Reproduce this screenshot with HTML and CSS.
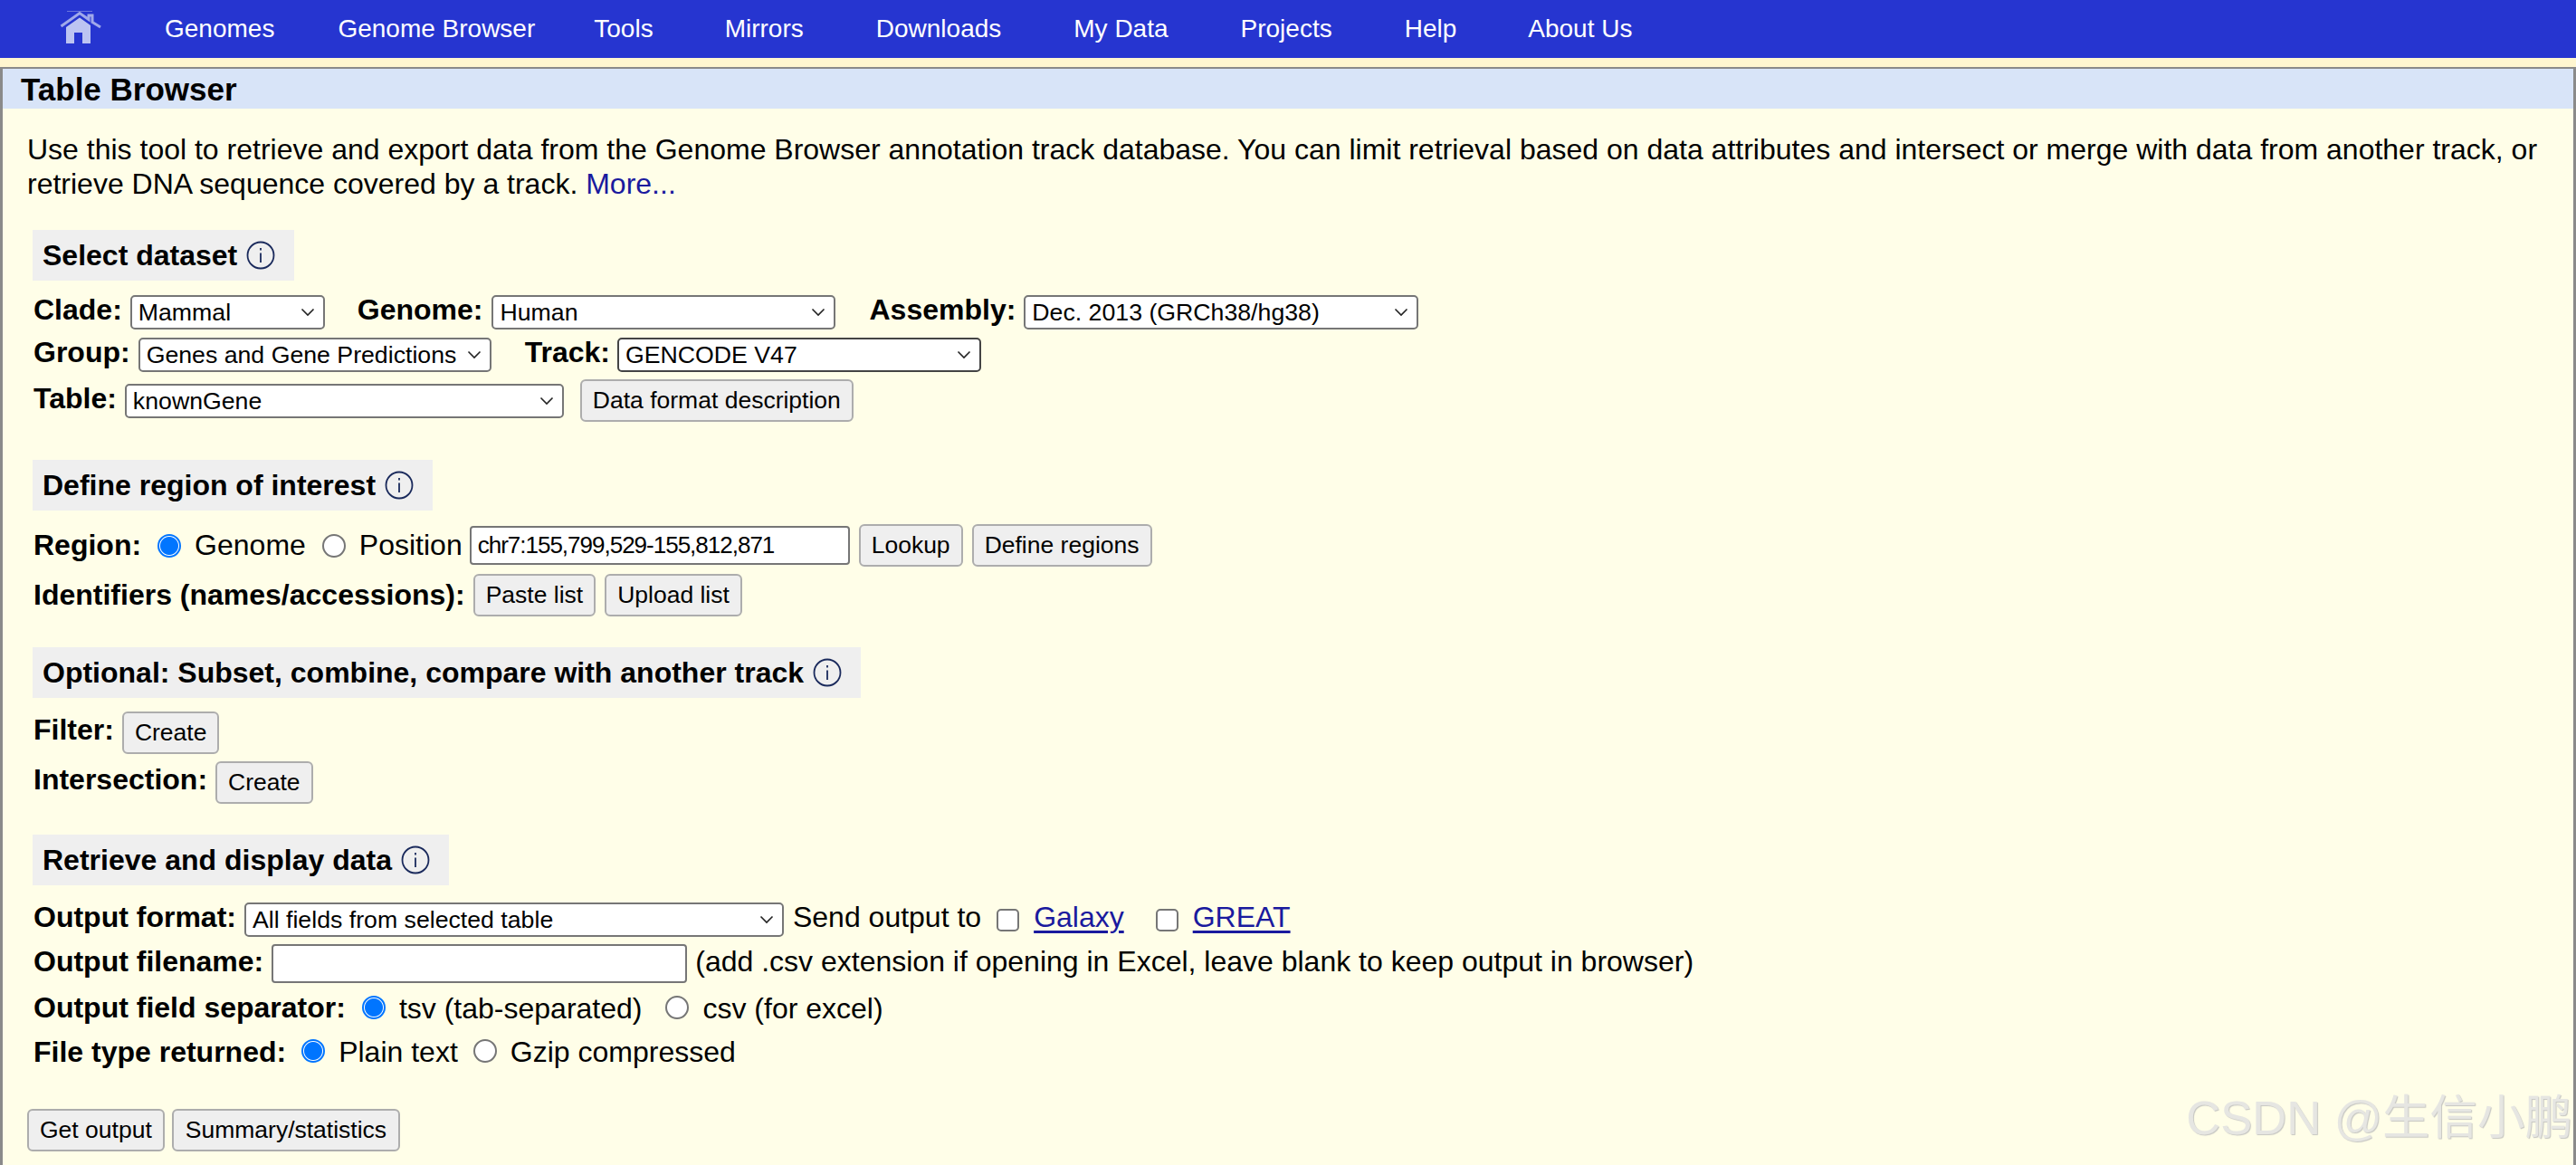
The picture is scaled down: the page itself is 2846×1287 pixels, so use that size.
FILE: index.html
```html
<!DOCTYPE html>
<html lang="en">
<head>
<meta charset="utf-8">
<title>Table Browser</title>
<link rel="stylesheet" href="styles.css">
</head>
<body>
<nav class="nav">
  <a class="home" href="#" aria-label="Home">
    <svg viewBox="0 0 46 36" width="46" height="36"><path class="home-top" d="M8 0.5 H36"/><path class="home-roof" d="M1.5 17 L22 2.5 L32 9.5 V5 H36 V12.5 L45 18"/><path class="home-body" d="M7 18 L22 7.5 L34 16 V36 H25 V24 H16 V36 H7 Z"/></svg>
  </a>
  <a href="#" class="nav-item n1">Genomes</a>
  <a href="#" class="nav-item n2">Genome Browser</a>
  <a href="#" class="nav-item n3">Tools</a>
  <a href="#" class="nav-item n4">Mirrors</a>
  <a href="#" class="nav-item n5">Downloads</a>
  <a href="#" class="nav-item n6">My Data</a>
  <a href="#" class="nav-item n7">Projects</a>
  <a href="#" class="nav-item n8">Help</a>
  <a href="#" class="nav-item n9">About Us</a>
</nav>
<main class="panel">
  <h1 class="title">Table Browser</h1>
  <div class="content">
    <p class="intro">Use this tool to retrieve and export data from the Genome Browser annotation track database. You can limit retrieval based on data attributes and intersect or merge with data from another track, or retrieve DNA sequence covered by a track. <a class="more" href="#">More...</a></p>

    <h2 class="sec s1">Select dataset <svg class="info" viewBox="0 0 32 32"><circle cx="16" cy="16" r="14.5"/><path d="M16 13.5V24M16 8V10.5"/></svg></h2>
    <div class="row r-clade up">
      <b>Clade:</b><select class="sel w-clade"><option>Mammal</option></select>
      <b class="gap-genome">Genome:</b><select class="sel w-genome"><option>Human</option></select>
      <b class="gap-assembly">Assembly:</b><select class="sel w-assembly"><option>Dec. 2013 (GRCh38/hg38)</option></select>
    </div>
    <div class="row r-group up">
      <b>Group:</b><select class="sel w-group"><option>Genes and Gene Predictions</option></select>
      <b class="gap-track">Track:</b><select class="sel sel-dark w-track"><option>GENCODE V47</option></select>
    </div>
    <div class="row r-table up">
      <b>Table:</b><select class="sel w-table"><option>knownGene</option></select>
      <button class="btn gap-dfd">Data format description</button>
    </div>

    <h2 class="sec s2">Define region of interest <svg class="info" viewBox="0 0 32 32"><circle cx="16" cy="16" r="14.5"/><path d="M16 13.5V24M16 8V10.5"/></svg></h2>
    <div class="row r-region">
      <b>Region:</b><input class="radio gap-r1" type="radio" name="region" checked><span class="opt">Genome</span><input class="radio gap-r2" type="radio" name="region"><span class="opt">Position</span>
      <input class="txt txt-pos w-pos" type="text" value="chr7:155,799,529-155,812,871">
      <button class="btn gap-look">Lookup</button>
      <button class="btn gap-def">Define regions</button>
    </div>
    <div class="row r-ident">
      <b>Identifiers (names/accessions):</b><button class="btn gap-paste">Paste list</button><button class="btn gap-up">Upload list</button>
    </div>

    <h2 class="sec s3">Optional: Subset, combine, compare with another track <svg class="info" viewBox="0 0 32 32"><circle cx="16" cy="16" r="14.5"/><path d="M16 13.5V24M16 8V10.5"/></svg></h2>
    <div class="row r-filter up"><b>Filter:</b><button class="btn gap-create">Create</button></div>
    <div class="row r-inter up"><b>Intersection:</b><button class="btn gap-create">Create</button></div>

    <h2 class="sec s4">Retrieve and display data <svg class="info" viewBox="0 0 32 32"><circle cx="16" cy="16" r="14.5"/><path d="M16 13.5V24M16 8V10.5"/></svg></h2>
    <div class="row r-format up">
      <b>Output format:</b><select class="sel w-format"><option>All fields from selected table</option></select>
      <span class="gap-send">Send output to</span>
      <input class="check gap-c1" type="checkbox"><a class="link gap-l1" href="#">Galaxy</a>
      <input class="check gap-c2" type="checkbox"><a class="link gap-l2" href="#">GREAT</a>
    </div>
    <div class="row r-file up">
      <b>Output filename:</b><input class="txt w-file" type="text">
      <span class="gap-hint">(add .csv extension if opening in Excel, leave blank to keep output in browser)</span>
    </div>
    <div class="row r-sep down">
      <b>Output field separator:</b><input class="radio gap-s1" type="radio" name="sep" checked><span class="opt">tsv (tab-separated)</span><input class="radio gap-s2" type="radio" name="sep"><span class="opt">csv (for excel)</span>
    </div>
    <div class="row r-type down">
      <b>File type returned:</b><input class="radio gap-t1" type="radio" name="ft" checked><span class="opt">Plain text</span><input class="radio gap-t2" type="radio" name="ft"><span class="opt">Gzip compressed</span>
    </div>
    <div class="row r-submit">
      <button class="btn">Get output</button><button class="btn btn-sum gap-sum">Summary/statistics</button>
    </div>
  </div>
</main>
<div class="watermark">CSDN @生信小鹏</div>
</body>
</html>
```
FILE: styles.css
```css
* { box-sizing: border-box; }
html, body { margin: 0; padding: 0; }
body {
  height: 1287px;
  overflow: hidden;
  background: #fff6d0;
  font-family: "Liberation Sans", Arial, sans-serif;
  font-size: 32px;
  color: #000;
  position: relative;
}
.nav {
  height: 64px;
  background: #2635d0;
  display: flex;
  align-items: center;
  margin-bottom: 10px;
}
.home { display: block; width: 46px; height: 36px; margin: -4px 0 0 66px; }
.home svg { display: block; filter: blur(0.5px); }
.home-top { fill: none; stroke: #6c76dc; stroke-width: 1; }
.home-roof { fill: none; stroke: #a0a9ea; stroke-width: 3; }
.home-body { fill: #bcc4f2; }
.nav-item { color: #fff; text-decoration: none; font-size: 28px; white-space: nowrap; }
.n1 { margin-left: 70px; }
.n2 { margin-left: 70px; }
.n3 { margin-left: 65px; }
.n4 { margin-left: 79px; }
.n5 { margin-left: 80px; }
.n6 { margin-left: 80px; }
.n7 { margin-left: 80px; }
.n8 { margin-left: 80px; }
.n9 { margin-left: 79px; }

.panel {
  height: 1213px;
  border: solid #8a8a8a;
  border-width: 2px 3px 0 3px;
  background: #fffee8;
}
.title {
  margin: 0;
  height: 44px;
  line-height: 46px;
  padding-left: 20px;
  background: #d8e4f8;
  font-size: 35px;
  font-weight: 700;
}
.content { padding: 0 0 0 27px; }
.intro { margin: 0; padding-top: 26px; line-height: 38px; width: 2790px; }
.more { color: #1a1a9e; text-decoration: none; }

.sec {
  display: flex;
  align-items: center;
  gap: 10px;
  width: max-content;
  height: 56px;
  margin: 0 0 0 6px;
  padding: 0 21px 0 11px;
  background: #efefef;
  font-size: 32px;
  font-weight: 700;
  white-space: nowrap;
}
.info { width: 32px; height: 32px; fill: none; stroke: #1a2a5c; stroke-width: 1.8; }
.s1 { margin-top: 32px; }
.s2 { margin-top: 42px; }
.s3 { margin-top: 34px; }
.s4 { margin-top: 35px; }

.row { display: flex; align-items: center; margin-left: 7px; white-space: nowrap; }
.row b { font-weight: 700; }
.up b, .up .gap-send, .up .gap-hint, .up .link { margin-top: -5px; }
.down .opt { margin-top: 3px; }
.r-type b { margin-top: 2px; }
.r-clade { height: 38px; margin-top: 16px; }
.r-group { height: 38px; margin-top: 9px; }
.r-table { height: 47px; margin-top: 8px; }
.r-region { height: 47px; margin-top: 15px; }
.r-ident { height: 47px; margin-top: 8px; }
.r-filter { height: 46px; margin-top: 15px; }
.r-inter { height: 46px; margin-top: 9px; }
.r-format { height: 38px; margin-top: 19px; }
.r-file { height: 43px; margin-top: 8px; }
.r-sep { height: 38px; margin-top: 8px; }
.r-type { height: 40px; margin-top: 9px; }
.r-submit { height: 47px; margin-top: 44px; margin-left: 0; }

.sel {
  appearance: none;
  height: 38px;
  padding: 0 34px 0 7px;
  font: 26.7px "Liberation Sans", Arial, sans-serif;
  color: #000;
  border: 2px solid #767676;
  border-radius: 5px;
  background: #fff url("data:image/svg+xml,%3Csvg xmlns='http://www.w3.org/2000/svg' width='16' height='10'%3E%3Cpath d='M1.5 1.5 L8 8 L14.5 1.5' fill='none' stroke='%23222' stroke-width='1.6'/%3E%3C/svg%3E") no-repeat right 9px center;
}
.sel-dark { border-color: #444; }
.btn {
  height: 47px;
  padding: 0 12px;
  font: 26.5px "Liberation Sans", Arial, sans-serif;
  color: #000;
  background: #efefef;
  border: 2px solid #adadad;
  border-radius: 6px;
  white-space: nowrap;
}
.btn-sum { padding: 0 13px; }
.txt {
  height: 43px;
  padding: 0 7px;
  font: 26px "Liberation Sans", Arial, sans-serif;
  border: 2px solid #767676;
  border-radius: 4px;
  background: #fff;
  color: #000;
}
.txt-pos { letter-spacing: -1px; }
.radio {
  appearance: none;
  width: 26px;
  height: 26px;
  margin: 0;
  flex: none;
  background: #fff;
  border: 2px solid #767676;
  border-radius: 50%;
}
.radio:checked {
  border-color: #0075ff;
  background: radial-gradient(circle, #0075ff 0 9.5px, #fff 10.5px);
}
.check {
  appearance: none;
  width: 25px;
  height: 25px;
  margin: 0;
  flex: none;
  background: #fff;
  border: 2px solid #767676;
  border-radius: 5px;
}
.link { color: #1a1a9e; text-decoration: underline; text-decoration-thickness: 3px; text-underline-offset: 4px; }

.w-clade { width: 215px; margin-left: 9px; }
.gap-genome { margin-left: 36px; }
.w-genome { width: 380px; margin-left: 10px; }
.gap-assembly { margin-left: 37px; }
.w-assembly { width: 436px; margin-left: 9px; }
.w-group { width: 390px; margin-left: 9px; }
.gap-track { margin-left: 37px; }
.w-track { width: 402px; margin-left: 8px; }
.w-table { width: 485px; margin-left: 9px; }
.gap-dfd { margin-left: 18px; }
.gap-r1 { margin-left: 18px; }
.opt { margin-left: 15px; }
.gap-r2 { margin-left: 18px; }
.w-pos { width: 420px; margin-left: 8px; }
.gap-look { margin-left: 10px; }
.gap-def { margin-left: 10px; }
.gap-paste { margin-left: 9px; }
.gap-up { margin-left: 10px; }
.gap-create { margin-left: 9px; }
.w-format { width: 596px; margin-left: 9px; }
.gap-send { margin-left: 10px; }
.gap-c1 { margin-left: 17px; }
.gap-l1 { margin-left: 16px; }
.gap-c2 { margin-left: 35px; }
.gap-l2 { margin-left: 16px; }
.w-file { width: 459px; margin-left: 9px; }
.gap-hint { margin-left: 9px; }
.gap-s1 { margin-left: 18px; }
.gap-s2 { margin-left: 26px; }
.gap-t1 { margin-left: 17px; }
.gap-t2 { margin-left: 17px; }
.gap-sum { margin-left: 8px; }

.watermark {
  position: absolute;
  right: 4px;
  bottom: 19px;
  font: 52.5px "Liberation Sans", "Noto Sans CJK SC", sans-serif;
  color: #e6e6e2;
  text-shadow: 1px 1px 1px #c6c6c2;
  white-space: nowrap;
}
```
